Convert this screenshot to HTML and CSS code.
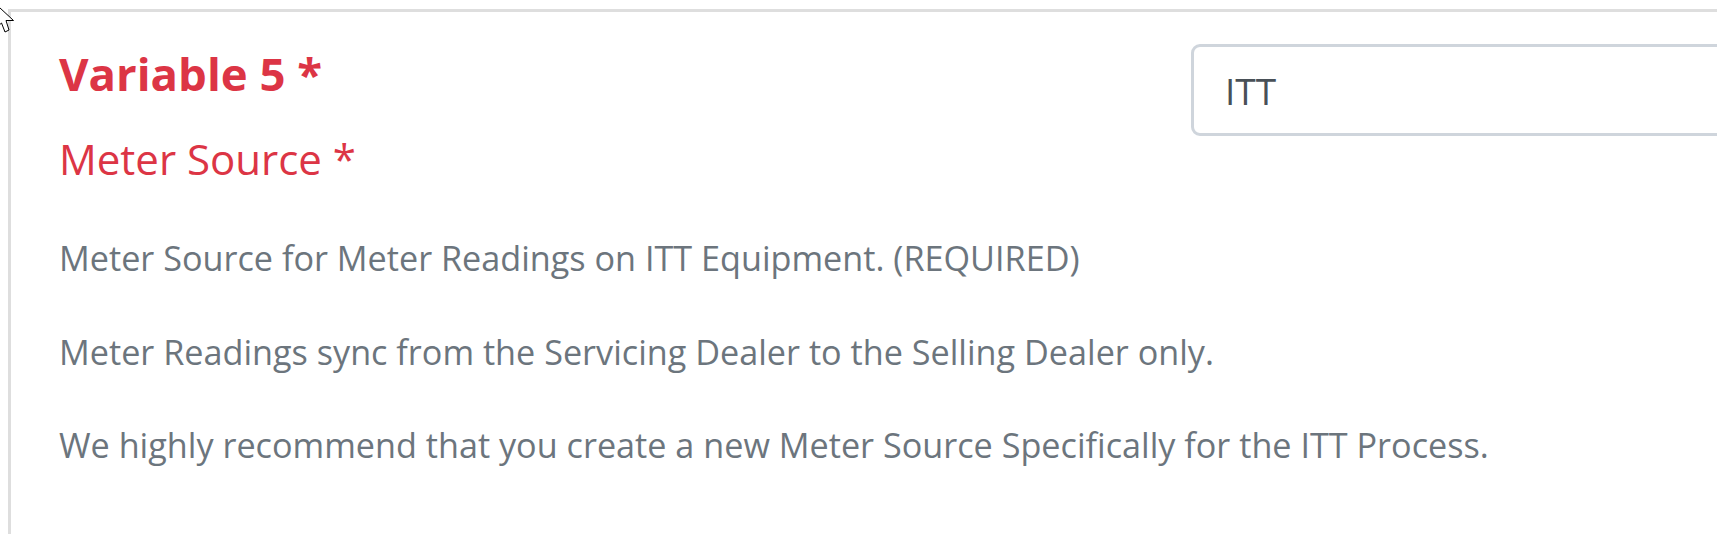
FILE: index.html
```html
<!DOCTYPE html>
<html lang="en">
<head>
    <meta charset="UTF-8">
    <meta name="viewport" content="width=device-width, initial-scale=1.0">
    <title>Variable 5</title>
    <link rel="stylesheet" href="styles.css">
</head>
<body>

    <!-- mouse pointer left in the capture -->
    <svg class="pointer" width="20" height="40" viewBox="0 0 20 40">
        <polygon points="-14,-5 13.5,20.5 6,20.5 9,30 5,32 1.5,23 -4,28" fill="#fff" stroke="#000" stroke-width="1"/>
    </svg>

    <div class="card">
        <div class="field-head">
            <h2 class="field-title">Variable 5 *</h2>
            <input type="text" id="meter-source" class="form-control" value="ITT">
        </div>
        <label class="field-label" for="meter-source">Meter Source *</label>
        <p class="field-help">Meter Source for Meter Readings on ITT Equipment. (REQUIRED)</p>
        <p class="field-help">Meter Readings sync from the Servicing Dealer to the Selling Dealer only.</p>
        <p class="field-help">We highly recommend that you create a new Meter Source Specifically for the ITT Process.</p>
    </div>

</body>
</html>
```

FILE: styles.css
```css
html, body { overflow: hidden; }
body { margin: 0; padding: 9px 0 0 8px; font-family: "Open Sans", "Noto Sans", sans-serif; background: #fff; }

.pointer { position: absolute; top: 0; left: 0; z-index: 2; }

/* card runs past the right and bottom edge of the window */
.card {
    width: 2200px;
    min-height: 700px;
    border: 3px solid #dedede;
    padding: 33px 0 0 48px;
}

.field-head { display: flex; align-items: flex-start; }

.field-title {
    flex: 0 0 1132px;
    margin: -1px 0 0;
    font-size: 45.5px;
    line-height: 58px;
    font-weight: 700;
    color: #dc3545;
}

.field-label {
    display: block;
    margin-top: -2px;
    font-size: 42px;
    line-height: 50px;
    color: #dc3545;
}

.field-help {
    margin: 0 0 53.5px;
    font-size: 34.2px;
    line-height: 40px;
    white-space: nowrap;
    color: #6c757d;
}
.field-label + .field-help { margin-top: 54px; }

.form-control {
    box-sizing: border-box;
    width: 760px;
    height: 92px;
    margin-top: -1px;
    padding: 0 31px;
    border: 3px solid #cfd5dc;
    border-radius: 9px;
    font-family: inherit;
    font-size: 37px;
    color: #495057;
    background: #fff;
}
```
